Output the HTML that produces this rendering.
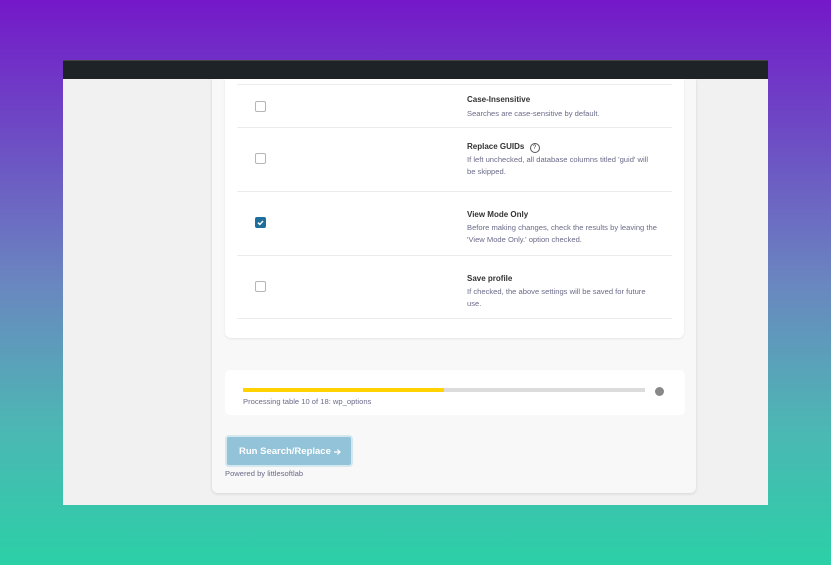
<!DOCTYPE html>
<html><head><style>
*{margin:0;padding:0;box-sizing:border-box}
body{width:831px;height:565px;overflow:hidden;font-family:"Liberation Sans",sans-serif;background:linear-gradient(180deg,#7418c9 0%,#6d4ec4 25%,#6a86c0 50%,#4db6b4 75%,#2bd0a7 100%);position:relative}
.win{position:absolute;left:63px;top:60px;width:705px;height:445px;background:#f1f1f1;overflow:hidden}
.bar{height:19px;background:#1d2327;border-top:1px solid #444}
.panel{position:absolute;left:149px;top:19px;width:484px;height:414px;background:#f8f8f8;border-radius:0 0 6px 6px;box-shadow:0 1px 3px rgba(0,0,0,.12)}
.card{position:absolute;left:13px;top:0;width:459px;height:259px;background:#fff;border-radius:0 0 6px 6px;box-shadow:0 1px 2px rgba(0,0,0,.08)}
.row{position:absolute;left:12px;width:435px;border-bottom:1px solid #ececec}
.cb{position:absolute;left:18px;width:11px;height:11px;border:1px solid #b5b5b5;border-radius:2px;background:#fff}
.cb.on{background:#1f6f9c;border-color:#1f6f9c}
.t{position:absolute;left:230px;font-size:8px;font-weight:bold;color:#333}
.d{position:absolute;left:230px;font-size:7.6px;color:#6b6b8a;line-height:11.5px;width:190px}
.prog{position:absolute;left:13px;top:291px;width:460px;height:45px;background:#fff;border-radius:5px}
.btn{position:absolute;left:13px;top:356px;width:128px;height:32px;background:#93c3d9;border:2px solid #d4e8f0;border-radius:4px;color:#fff;font-size:9.5px;font-weight:bold;padding:9px 0 0 12px}
</style></head><body>
<div class="win"><div class="bar"></div>
<div class="panel">
<div class="card">
<div class="row" style="top:0;height:6px"></div>
<div class="row" style="top:6px;height:43px"><div class="cb" style="top:16px"></div><div class="t" style="top:10px">Case-Insensitive</div><div class="d" style="top:23px;width:220px">Searches are case-sensitive by default.</div></div>
<div class="row" style="top:49px;height:64px"><div class="cb" style="top:25px"></div><div class="t" style="top:14px">Replace GUIDs <span style="display:inline-block;width:10px;height:10px;border:1px solid #555;border-radius:50%;font-size:6px;text-align:center;line-height:8px;font-weight:normal;margin-left:3px">?</span></div><div class="d" style="top:26px">If left unchecked, all database columns titled 'guid' will be skipped.</div></div>
<div class="row" style="top:113px;height:64px"><div class="cb on" style="top:25px"><svg width="9" height="9" viewBox="0 0 9 9" style="position:absolute;left:0;top:0"><path d="M2 4.6l1.8 1.8L7 3" stroke="#fff" stroke-width="1.5" fill="none"/></svg></div><div class="t" style="top:18px">View Mode Only</div><div class="d" style="top:30px">Before making changes, check the results by leaving the 'View Mode Only.' option checked.</div></div>
<div class="row" style="top:177px;height:63px"><div class="cb" style="top:25px"></div><div class="t" style="top:18px">Save profile</div><div class="d" style="top:30px">If checked, the above settings will be saved for future use.</div></div>
</div>
<div class="prog">
<div style="position:absolute;left:18px;top:18px;width:402px;height:4px;background:#dcdcdc"><div style="width:201px;height:4px;background:#ffd200"></div></div>
<div style="position:absolute;left:430px;top:17px;width:9px;height:9px;border-radius:50%;background:#888"></div>
<div style="position:absolute;left:18px;top:27px;font-size:7.6px;color:#6b6b8a">Processing table 10 of 18: wp_options</div>
</div>
<div class="btn">Run Search/Replace<svg width="8" height="8" viewBox="0 0 8 8" style="position:absolute;left:106px;top:11px"><path d="M1 4h6M4.5 1.5L7 4 4.5 6.5" stroke="#fff" stroke-width="1.2" fill="none"/></svg></div>
<div style="position:absolute;left:13px;top:390px;font-size:7.6px;color:#6b6b8a">Powered by littlesoftlab</div>
</div>
</div>
</body></html>
